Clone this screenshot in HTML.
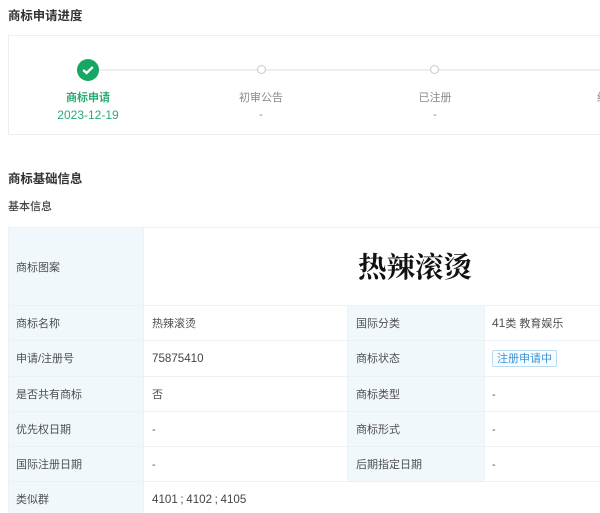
<!DOCTYPE html>
<html lang="zh"><head><meta charset="utf-8">
<style>
html,body{margin:0;padding:0;background:#fff}
#p{position:relative;width:600px;height:513px;overflow:hidden;background:#fff;font-family:"Liberation Sans","Noto Sans CJK SC",sans-serif;font-size:11px;color:#4f4f4f;filter:blur(0.3px)}
#p div{position:absolute;white-space:nowrap}
.t{line-height:16px;height:16px}
.h{font-size:12.4px;font-weight:700;color:#333;left:8px}
.l{background:#f0f8fc}
.hl{left:8px;height:1px;background:#ebf1f5}
.vl{width:1px;background:#ebf1f5}
.s{text-align:center;width:120px;color:#8a8a8a}
.c{width:7px;height:7px;border:1.5px solid #c8c8c8;border-radius:50%;background:#fff;top:65px}
.n{font-size:11.6px;color:#444}
</style></head><body>
<div id="p">
<div class="t h" style="top:8px">商标申请进度</div>
<div style="left:8px;top:35px;width:600px;height:98px;border:1px solid #eeeeee"></div>
<div style="left:88px;top:69px;width:512px;height:1.5px;background:#eeeeee"></div>
<div style="left:77px;top:59px;width:22px;height:22px;border-radius:50%;background:#16a765"></div>
<svg style="position:absolute;left:77px;top:59px" width="22" height="22" viewBox="0 0 22 22"><path d="M6.2 11 L9.6 14 L15.8 8" fill="none" stroke="#fff" stroke-width="2.3"/></svg>
<div class="c" style="left:256.5px"></div>
<div class="c" style="left:430px"></div>
<div class="t s" style="left:28px;top:90px;color:#2bab73;font-weight:700">商标申请</div>
<div class="t s" style="left:28px;top:107px;color:#2bab73;font-size:12px">2023-12-19</div>
<div class="t s" style="left:201px;top:90px">初审公告</div>
<div class="t s" style="left:201px;top:107px">-</div>
<div class="t s" style="left:375px;top:90px">已注册</div>
<div class="t s" style="left:375px;top:107px">-</div>
<div class="t" style="left:597px;top:90px;color:#8a8a8a">终</div>

<div class="t h" style="top:171px">商标基础信息</div>
<div class="t" style="left:8px;top:199px;font-weight:500;color:#444">基本信息</div>

<div class="l" style="left:8px;top:227px;width:135px;height:286px"></div>
<div class="l" style="left:347px;top:305px;width:137px;height:176px"></div>
<div class="hl" style="top:227px;width:592px"></div>
<div class="hl" style="top:305px;width:592px"></div>
<div class="hl" style="top:340px;width:592px"></div>
<div class="hl" style="top:376px;width:592px"></div>
<div class="hl" style="top:411px;width:592px"></div>
<div class="hl" style="top:446px;width:592px"></div>
<div class="hl" style="top:481px;width:592px"></div>
<div class="vl" style="left:8px;top:227px;height:286px"></div>
<div class="vl" style="left:143px;top:227px;height:286px"></div>
<div class="vl" style="left:347px;top:305px;height:176px"></div>
<div class="vl" style="left:484px;top:305px;height:176px"></div>

<div style="left:358px;top:248px;font-family:'Liberation Serif','Noto Serif CJK SC',serif;font-weight:700;font-size:28.5px;line-height:42px;color:#111">热辣滚烫</div>

<div class="t" style="left:16px;top:260px">商标图案</div>
<div class="t" style="left:16px;top:316px">商标名称</div>
<div class="t" style="left:152px;top:316px">热辣滚烫</div>
<div class="t" style="left:356px;top:316px">国际分类</div>
<div class="t" style="left:492px;top:315px"><span style="font-size:12px">41</span>类 教育娱乐</div>
<div class="t" style="left:16px;top:351px">申请/注册号</div>
<div class="t n" style="left:152px;top:351px">75875410</div>
<div class="t" style="left:356px;top:351px">商标状态</div>
<div style="left:492px;top:350px;width:63px;height:15px;border:1px solid #b8dbf2;border-radius:2px;background:#f7fcff;color:#3a93d6;text-align:center;line-height:16px;font-size:11px">注册申请中</div>
<div class="t" style="left:16px;top:387px">是否共有商标</div>
<div class="t" style="left:152px;top:387px">否</div>
<div class="t" style="left:356px;top:387px">商标类型</div>
<div class="t" style="left:492px;top:387px">-</div>
<div class="t" style="left:16px;top:422px">优先权日期</div>
<div class="t" style="left:152px;top:422px">-</div>
<div class="t" style="left:356px;top:422px">商标形式</div>
<div class="t" style="left:492px;top:422px">-</div>
<div class="t" style="left:16px;top:457px">国际注册日期</div>
<div class="t" style="left:152px;top:457px">-</div>
<div class="t" style="left:356px;top:457px">后期指定日期</div>
<div class="t" style="left:492px;top:457px">-</div>
<div class="t" style="left:16px;top:492px">类似群</div>
<div class="t n" style="left:152px;top:492px;word-spacing:-0.6px">4101 ; 4102 ; 4105</div>
</div>
</body></html>
